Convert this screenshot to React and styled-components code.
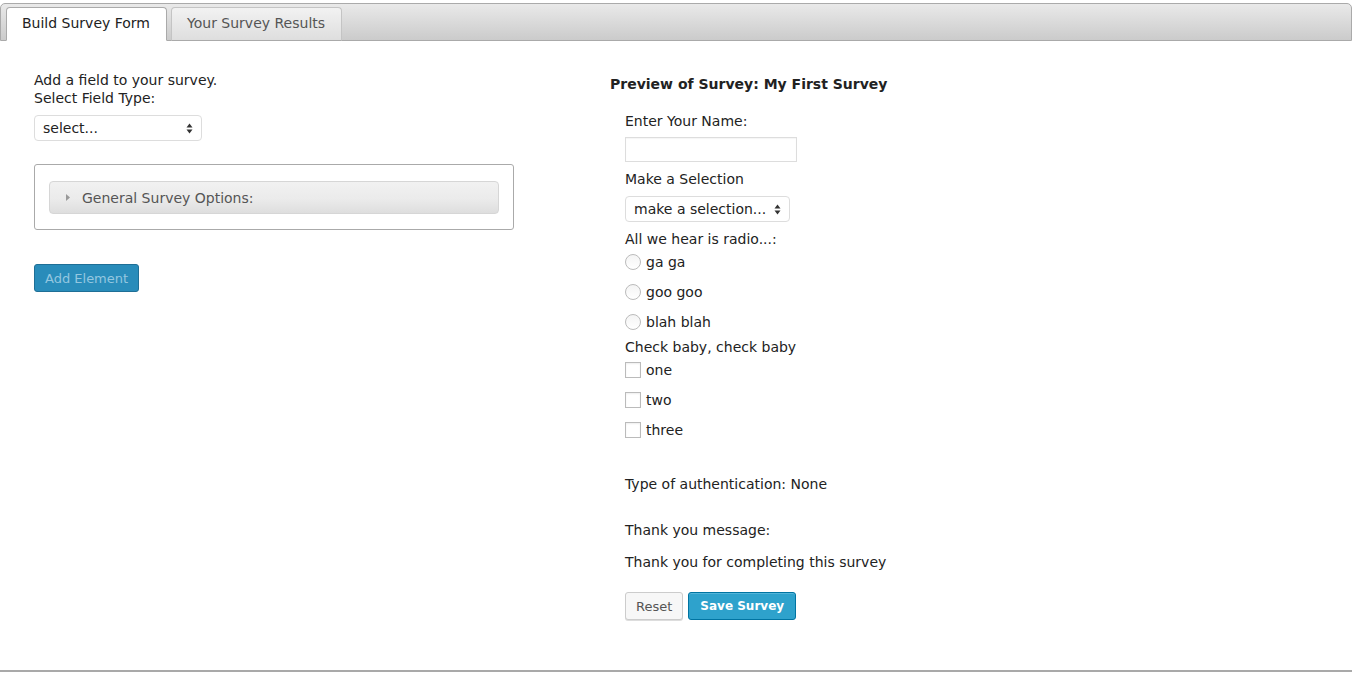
import React from "react";
import styled, { createGlobalStyle } from "styled-components";

const GlobalStyle = createGlobalStyle`
  html, body {
    margin: 0;
    padding: 0;
    background: #fff;
  }
  body {
    font-family: "DejaVu Sans", Verdana, sans-serif;
    font-size: 14px;
    color: #222;
  }
`;

const Wrapper = styled.div`
  padding-top: 3px;
  margin-right: 3px;
`;

const TabBar = styled.div`
  display: flex;
  align-items: flex-end;
  gap: 4px;
  height: 36px;
  padding: 0 0 0 5px;
  border: 1px solid #aaa;
  border-radius: 5px 5px 0 0;
  background: linear-gradient(#e9e9e9, #cbcbcb);
`;

const Tab = styled.div`
  height: 34px;
  margin-bottom: -1px;
  padding: 0 16px 2px 15px;
  display: flex;
  align-items: center;
  border: 1px solid ${(p) => (p.$active ? "#aaa" : "#c4c4c4")};
  border-bottom: ${(p) => (p.$active ? "1px solid #fff" : "1px solid #aaa")};
  border-radius: 4px 4px 0 0;
  background: ${(p) =>
    p.$active ? "#fff" : "linear-gradient(#f2f2f2, #dedede)"};
  color: ${(p) => (p.$active ? "#222" : "#555")};
  box-sizing: border-box;
`;

const Panel = styled.div`
  display: grid;
  grid-template-columns: 576px 1fr;
  height: 631px;
  box-sizing: border-box;
  padding: 30px 0 0 34px;
  border-bottom: 2px solid #a9a9a9;
`;

const Column = styled.div`
  display: flex;
  flex-direction: column;
  align-items: flex-start;
  margin-top: ${(p) => p.$top || 0}px;
`;

const Line = styled.div`
  line-height: 18px;
  margin-top: ${(p) => p.$mt || 0}px;
  margin-left: ${(p) => p.$ml || 0}px;
  font-weight: ${(p) => (p.$bold ? 700 : 400)};
  color: ${(p) => p.$color || "#222"};
`;

const SelectBox = styled.div`
  display: flex;
  align-items: center;
  justify-content: space-between;
  width: ${(p) => p.$width}px;
  height: 26px;
  box-sizing: border-box;
  margin-top: 8px;
  margin-left: ${(p) => p.$ml || 0}px;
  padding: 0 8px 0 8px;
  border: 1px solid #ddd;
  border-radius: 4px;
  background: #fff;
  color: #222;
`;

const OptionsBox = styled.div`
  width: 480px;
  box-sizing: border-box;
  margin-top: 23px;
  padding: 16px 14px 15px 14px;
  border: 1px solid #aaa;
  border-radius: 3px;
`;

const AccordionHeader = styled.div`
  display: flex;
  align-items: center;
  gap: 11px;
  height: 33px;
  box-sizing: border-box;
  padding-left: 15px;
  border: 1px solid #d6d6d6;
  border-radius: 4px;
  background: linear-gradient(#f1f1f1 0%, #ebebeb 55%, #dedede 100%);
  color: #555;
`;

const Button = styled.div`
  display: inline-flex;
  align-items: center;
  justify-content: center;
  height: 28px;
  box-sizing: border-box;
  padding: 0 ${(p) => p.$px || 10}px;
  border-radius: 3px;
  font-size: 13px;
`;

const PrimaryButton = styled(Button)`
  background: #2ea2cc;
  border: 1px solid #0074a2;
  color: #fff;
  font-weight: 700;
  font-size: 12px;
  box-shadow: inset 0 1px 0 rgba(120, 200, 230, 0.5);
`;

const DisabledPrimary = styled(Button)`
  margin-top: 34px;
  background: #298cba;
  border: 1px solid #1f6f96;
  color: #94c7e0;
`;

const SecondaryButton = styled(Button)`
  background: #f7f7f7;
  border: 1px solid #ccc;
  color: #555;
  box-shadow: 0 1px 0 #ddd;
`;

const ButtonRow = styled.div`
  display: flex;
  gap: 5px;
  margin-top: 21px;
  margin-left: 15px;
`;

const TextField = styled.div`
  width: 172px;
  height: 25px;
  box-sizing: border-box;
  margin-top: 7px;
  margin-left: 15px;
  border: 1px solid #ddd;
  background: #fff;
  box-shadow: inset 0 1px 1px rgba(0, 0, 0, 0.04);
`;

const ChoiceRow = styled.div`
  display: flex;
  align-items: center;
  gap: 5px;
  height: 30px;
  margin-left: 15px;
  margin-top: ${(p) => (p.$first ? -1 : 0)}px;
  margin-bottom: ${(p) => (p.$last ? 1 : 0)}px;
  line-height: 18px;
`;

const Radio = styled.span`
  width: 16px;
  height: 16px;
  box-sizing: border-box;
  border: 1px solid #bbb;
  border-radius: 50%;
  background: linear-gradient(#f4f4f4, #fff);
`;

const Checkbox = styled.span`
  width: 16px;
  height: 16px;
  box-sizing: border-box;
  border: 1px solid #bbb;
  background: #fff;
  box-shadow: inset 0 1px 2px rgba(0, 0, 0, 0.07);
`;

function UpDown() {
  return (
    <svg width="7" height="11" viewBox="0 0 7 11">
      <path d="M3.5 0.5 L6.5 4.5 H0.5 Z" fill="#333" />
      <path d="M3.5 10.5 L6.5 6.5 H0.5 Z" fill="#333" />
    </svg>
  );
}

function Caret() {
  return (
    <svg width="6" height="9" viewBox="0 0 6 9">
      <path d="M1 1 L5 4.5 L1 8 Z" fill="#999" />
    </svg>
  );
}

const radios = ["ga ga", "goo goo", "blah blah"];
const checks = ["one", "two", "three"];

export default function App() {
  return (
    <Wrapper>
      <GlobalStyle />
      <TabBar>
        <Tab $active>Build Survey Form</Tab>
        <Tab>Your Survey Results</Tab>
      </TabBar>
      <Panel>
        <Column>
          <Line>Add a field to your survey.</Line>
          <Line>Select Field Type:</Line>
          <SelectBox $width={168}>
            <span>select...</span>
            <UpDown />
          </SelectBox>
          <OptionsBox>
            <AccordionHeader>
              <Caret />
              <span>General Survey Options:</span>
            </AccordionHeader>
          </OptionsBox>
          <DisabledPrimary $px={10}>Add Element</DisabledPrimary>
        </Column>

        <Column $top={4}>
          <Line $bold>Preview of Survey: My First Survey</Line>
          <Line $mt={19} $ml={15}>Enter Your Name:</Line>
          <TextField />
          <Line $mt={8} $ml={15}>Make a Selection</Line>
          <SelectBox $width={165} $ml={15}>
            <span>make a selection...</span>
            <UpDown />
          </SelectBox>
          <Line $mt={8} $ml={15}>All we hear is radio...:</Line>
          {radios.map((r, i) => (
            <ChoiceRow key={r} $first={i === 0} $last={i === radios.length - 1}>
              <Radio />
              <span>{r}</span>
            </ChoiceRow>
          ))}
          <Line $ml={15}>Check baby, check baby</Line>
          {checks.map((c, i) => (
            <ChoiceRow key={c} $first={i === 0} $last={i === checks.length - 1}>
              <Checkbox />
              <span>{c}</span>
            </ChoiceRow>
          ))}
          <Line $mt={29} $ml={15}>Type of authentication: None</Line>
          <Line $mt={28} $ml={15}>Thank you message:</Line>
          <Line $mt={14} $ml={15}>Thank you for completing this survey</Line>
          <ButtonRow>
            <SecondaryButton $px={10}>Reset</SecondaryButton>
            <PrimaryButton $px={11}>Save Survey</PrimaryButton>
          </ButtonRow>
        </Column>
      </Panel>
    </Wrapper>
  );
}
